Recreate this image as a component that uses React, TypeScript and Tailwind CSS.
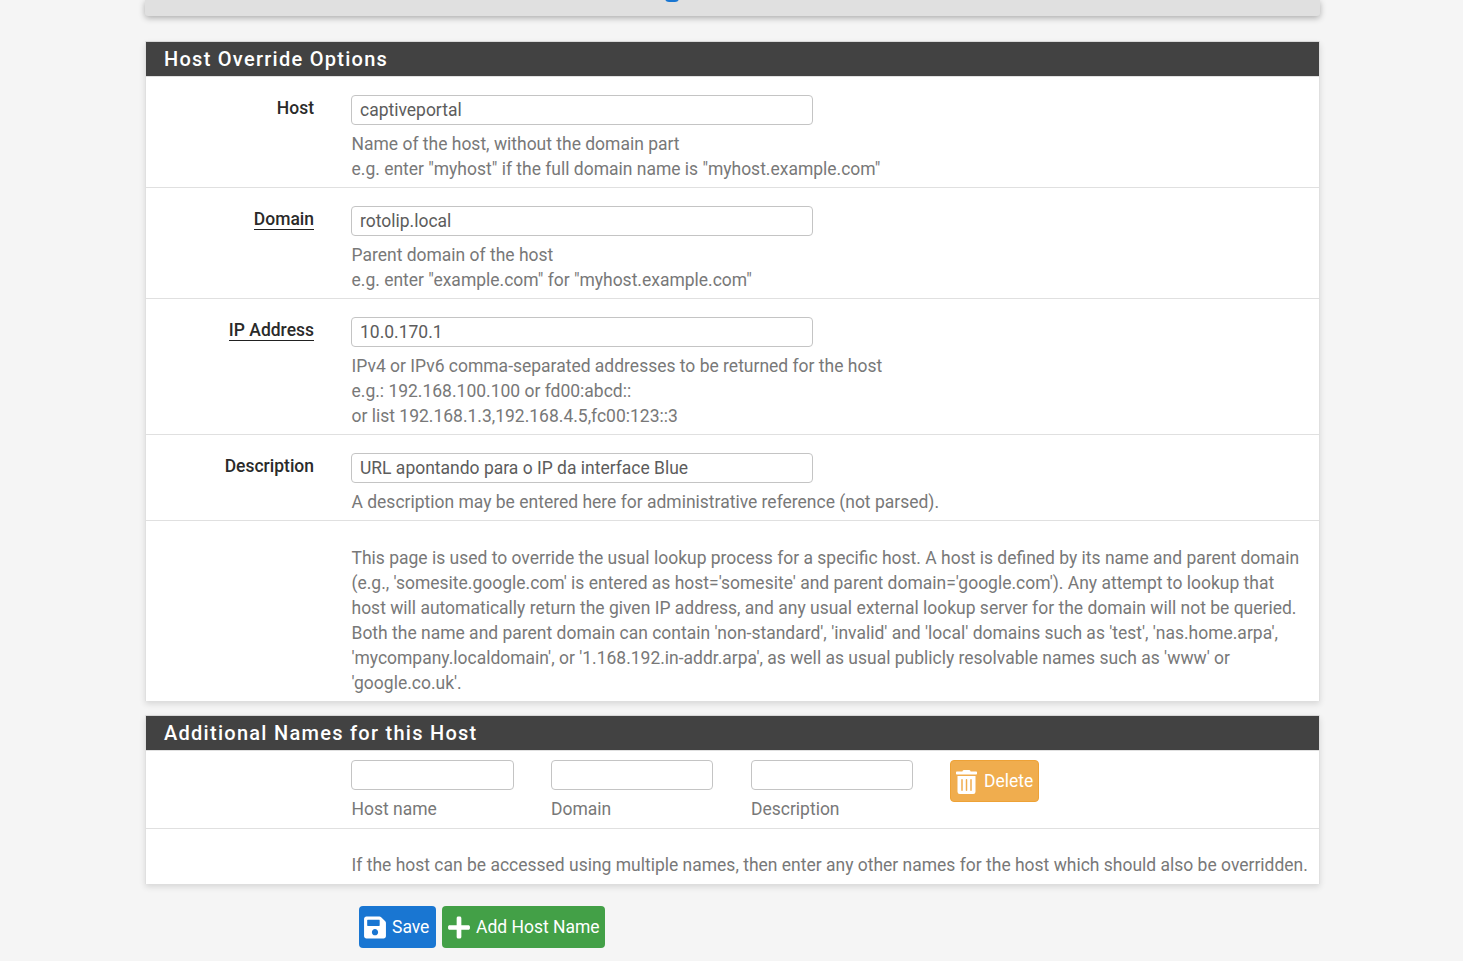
import React from "react";
import { FaPlus, FaSave, FaTrashAlt } from "react-icons/fa";

function Row({ label, underline, value, help }: { label: string; underline?: boolean; value: string; help: string[] }) {
  return (
    <div className="flex border-b border-[#e0e0e0] pt-[18px] pb-[5px]">
      <div className="w-[168px] shrink-0 text-right text-[#2a2a2a] font-medium leading-[25px] mt-[1px]">
        <span className={underline ? "border-b border-[#212121]" : ""}>{label}</span>
      </div>
      <div className="ml-[37px] flex-1">
        <input
          readOnly
          value={value}
          className="block w-[462px] h-[30px] rounded-[4px] border border-[#c4c4c4] bg-white px-2 text-[#5c5c5c] outline-none"
        />
        <div className="mt-[7px] pl-[0.5px] text-[#787878] leading-[25px] font-normal">
          {help.map((h) => (
            <div key={h}>{h}</div>
          ))}
        </div>
      </div>
    </div>
  );
}

function Heading({ title }: { title: string }) {
  return (
    <div className="h-[36px] border-t border-b border-t-[#d8d8d8] border-b-[#e0e0e0] bg-[#424242] pl-[18px] text-[20px] leading-[34px] font-medium tracking-[1.27px] text-white">
      {title}
    </div>
  );
}

export default function App() {
  return (
    <div className="min-h-[961px] h-[961px] overflow-hidden bg-[#f5f5f5] font-['Roboto',sans-serif] text-[17.49px]">
      <div className="mx-[145px] w-[1175px]">
        <div className="relative h-[16px] rounded-b-[3px] bg-[#e0e0e0] shadow-[0_2px_6px_rgba(0,0,0,0.3)]">
          <div className="absolute left-[520px] -top-[6px] h-[8px] w-[14px] rounded-full bg-[#1976d2]" />
        </div>

        <div className="mt-[25px] border-x border-[#e0e0e0] bg-white shadow-[0_3px_6px_rgba(0,0,0,0.12)]">
          <Heading title="Host Override Options" />
          <Row
            label="Host"
            value="captiveportal"
            help={["Name of the host, without the domain part", 'e.g. enter "myhost" if the full domain name is "myhost.example.com"']}
          />
          <Row
            label="Domain"
            underline
            value="rotolip.local"
            help={["Parent domain of the host", 'e.g. enter "example.com" for "myhost.example.com"']}
          />
          <Row
            label="IP Address"
            underline
            value="10.0.170.1"
            help={[
              "IPv4 or IPv6 comma-separated addresses to be returned for the host",
              "e.g.: 192.168.100.100 or fd00:abcd::",
              "or list 192.168.1.3,192.168.4.5,fc00:123::3",
            ]}
          />
          <Row
            label="Description"
            value="URL apontando para o IP da interface Blue"
            help={["A description may be entered here for administrative reference (not parsed)."]}
          />
          <div className="pl-[205.5px] pt-[25px] pb-[5px] pr-[10px] leading-[25px] text-[#787878]">
            This page is used to override the usual lookup process for a specific host. A host is defined by its name and parent domain
            <br />
            (e.g., 'somesite.google.com' is entered as host='somesite' and parent domain='google.com'). Any attempt to lookup that
            <br />
            host will automatically return the given IP address, and any usual external lookup server for the domain will not be queried.
            <br />
            Both the name and parent domain can contain 'non-standard', 'invalid' and 'local' domains such as 'test', 'nas.home.arpa',
            <br />
            'mycompany.localdomain', or '1.168.192.in-addr.arpa', as well as usual publicly resolvable names such as 'www' or
            <br />
            'google.co.uk'.
          </div>
        </div>

        <div className="mt-[14px] border-x border-[#e0e0e0] bg-white shadow-[0_3px_6px_rgba(0,0,0,0.12)]">
          <Heading title="Additional Names for this Host" />
          <div className="flex h-[78px] border-b border-[#e0e0e0] pl-[205px] pt-[9px]">
            <div className="w-[200px] shrink-0">
              <input readOnly className="block w-[163px] h-[30px] rounded-[4px] border border-[#c4c4c4] bg-white outline-none" />
              <div className="mt-[7px] pl-[0.5px] leading-[25px] text-[#787878]">Host name</div>
            </div>
            <div className="w-[200px] shrink-0">
              <input readOnly className="block w-[162px] h-[30px] rounded-[4px] border border-[#c4c4c4] bg-white outline-none" />
              <div className="mt-[7px] leading-[25px] text-[#787878]">Domain</div>
            </div>
            <div className="w-[199px] shrink-0">
              <input readOnly className="block w-[162px] h-[30px] rounded-[4px] border border-[#c4c4c4] bg-white outline-none" />
              <div className="mt-[7px] leading-[25px] text-[#787878]">Description</div>
            </div>
            <button className="flex h-[42px] w-[89px] items-center rounded-[4px] border border-[#eea236] bg-[#f0ad4e] pl-[5px] pt-[1px] text-white">
              <FaTrashAlt className="h-[24px] w-[21px]" />
              <span className="ml-[7px]">Delete</span>
            </button>
          </div>
          <div className="pl-[205.5px] pt-[24px] pb-[6px] leading-[25px] text-[#787878]">
            If the host can be accessed using multiple names, then enter any other names for the host which should also be overridden.
          </div>
        </div>

        <div className="mt-[22px] flex gap-[6px] pl-[214px]">
          <button className="flex h-[42px] w-[77px] items-center rounded-[4px] bg-[#1976d2] pl-[5px] text-white">
            <FaSave className="h-[25px] w-[22px]" />
            <span className="ml-[6px]">Save</span>
          </button>
          <button className="flex h-[42px] w-[163px] items-center rounded-[4px] bg-[#43a047] pl-[6px] text-white">
            <FaPlus className="h-[25px] w-[22px]" />
            <span className="ml-[6px]">Add Host Name</span>
          </button>
        </div>
      </div>
    </div>
  );
}
